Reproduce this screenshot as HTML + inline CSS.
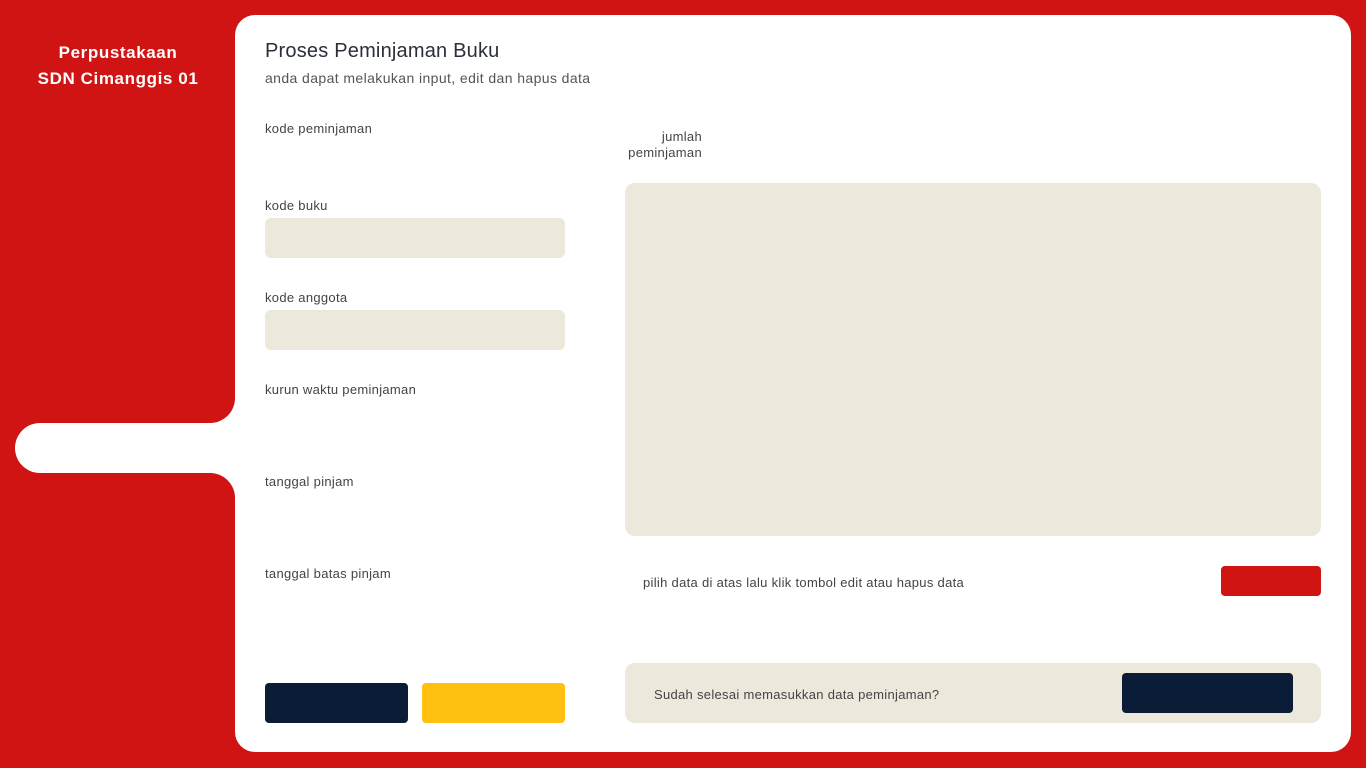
<!DOCTYPE html>
<html><head><meta charset="utf-8"><style>
*{margin:0;padding:0;box-sizing:border-box}
body{width:1366px;height:768px;background:#d01313;position:relative;overflow:hidden;font-family:"Liberation Sans",sans-serif}
.a{position:absolute}
.card{left:235px;top:15px;width:1116px;height:737px;background:#fff;border-radius:20px}
.lbl{font-size:13px;letter-spacing:0.3px;color:#444;position:absolute}
.beige{background:#ece8dc;border-radius:6px;position:absolute}
</style></head><body>
<div class="a" style="left:0;top:40px;width:236px;text-align:center;color:#fff;font-weight:bold;font-size:17px;letter-spacing:0.6px;line-height:26px">Perpustakaan<br>SDN Cimanggis 01</div>
<div class="card a"></div>
<div class="a" style="left:15px;top:423px;width:240px;height:50px;background:#fff;border-radius:25px"></div>
<div class="a" style="left:205px;top:393px;width:31px;height:31px;background:#fff"></div>
<div class="a" style="left:205px;top:393px;width:30px;height:30px;background:#d01313;border-bottom-right-radius:25px"></div>
<div class="a" style="left:205px;top:472px;width:31px;height:31px;background:#fff"></div>
<div class="a" style="left:205px;top:473px;width:30px;height:30px;background:#d01313;border-top-right-radius:25px"></div>

<div class="a" style="left:265px;top:40px;font-size:20px;letter-spacing:0.2px;color:#2a2f3a">Proses Peminjaman Buku</div>
<div class="a" style="left:265px;top:70px;font-size:14px;letter-spacing:0.4px;color:#555">anda dapat melakukan input, edit dan hapus data</div>

<div class="lbl" style="left:265px;top:121px">kode peminjaman</div>
<div class="lbl" style="left:265px;top:198px">kode buku</div>
<div class="beige" style="left:265px;top:218px;width:300px;height:40px"></div>
<div class="lbl" style="left:265px;top:290px">kode anggota</div>
<div class="beige" style="left:265px;top:310px;width:300px;height:40px"></div>
<div class="lbl" style="left:265px;top:382px">kurun waktu peminjaman</div>
<div class="lbl" style="left:265px;top:474px">tanggal pinjam</div>
<div class="lbl" style="left:265px;top:566px">tanggal batas pinjam</div>
<div class="a" style="left:265px;top:683px;width:143px;height:40px;background:#0b1d36;border-radius:4px"></div>
<div class="a" style="left:422px;top:683px;width:143px;height:40px;background:#ffc012;border-radius:4px"></div>

<div class="lbl" style="left:592px;top:129px;width:110px;text-align:right;line-height:16px">jumlah<br>peminjaman</div>
<div class="beige" style="left:625px;top:183px;width:696px;height:353px;border-radius:10px"></div>
<div class="lbl" style="left:643px;top:575px">pilih data di atas lalu klik tombol edit atau hapus data</div>
<div class="a" style="left:1221px;top:566px;width:100px;height:30px;background:#d01313;border-radius:4px"></div>
<div class="beige" style="left:625px;top:663px;width:696px;height:60px;border-radius:10px"></div>
<div class="lbl" style="left:654px;top:687px">Sudah selesai memasukkan data peminjaman?</div>
<div class="a" style="left:1122px;top:673px;width:171px;height:40px;background:#0b1d36;border-radius:4px"></div>
</body></html>
